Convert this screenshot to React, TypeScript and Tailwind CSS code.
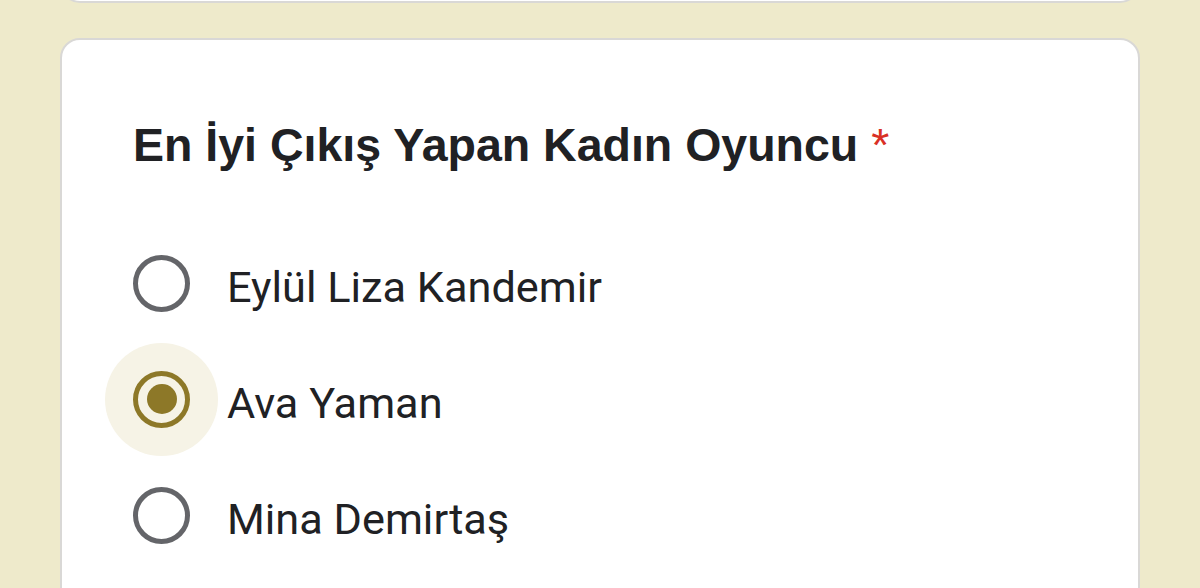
const OPTIONS = ['Eylül Liza Kandemir', 'Ava Yaman', 'Mina Demirtaş'];

function Radio({ checked }: { checked: boolean }) {
  return (
    <div className="relative h-[57px] w-[57px] shrink-0">
      {checked && <div className="absolute -inset-[28px] rounded-full bg-[#f6f3e6]" />}
      <div
        className={`relative flex h-full w-full items-center justify-center rounded-full border-[5px] ${
          checked ? 'border-[#8d7828]' : 'border-[#646569]'
        }`}
      >
        {checked && <div className="h-[30px] w-[30px] rounded-full bg-[#8d7828]" />}
      </div>
    </div>
  );
}

export default function App() {
  const selected = 1;
  return (
    <div className="h-[588px] w-[1200px] overflow-hidden bg-[#eeeacb] px-[60px]">
      <div className="-mt-[57px] h-[60px] rounded-[20px] border-2 border-[#d9d8d6] bg-white" />
      <div className="mt-[35px] h-[700px] rounded-[20px] border-2 border-[#d9d8d6] bg-white pl-[71px] pt-[78px]">
        <h1
          className="text-[46.5px] font-bold leading-[54px] text-[#202124]"
          style={{ fontFamily: '"Liberation Sans", Arial, sans-serif' }}
        >
          En İyi Çıkış Yapan Kadın Oyuncu <span className="font-normal text-[#d93025]">*</span>
        </h1>
        <div className="mt-[53px] flex flex-col" style={{ fontFamily: 'Roboto, "Noto Sans", sans-serif' }}>
          {OPTIONS.map((label, i) => (
            <div key={label} className="flex h-[116px] items-center">
              <Radio checked={i === selected} />
              <span className="ml-[37px] mt-[10px] text-[43.3px] text-[#202124]">{label}</span>
            </div>
          ))}
        </div>
      </div>
    </div>
  );
}
